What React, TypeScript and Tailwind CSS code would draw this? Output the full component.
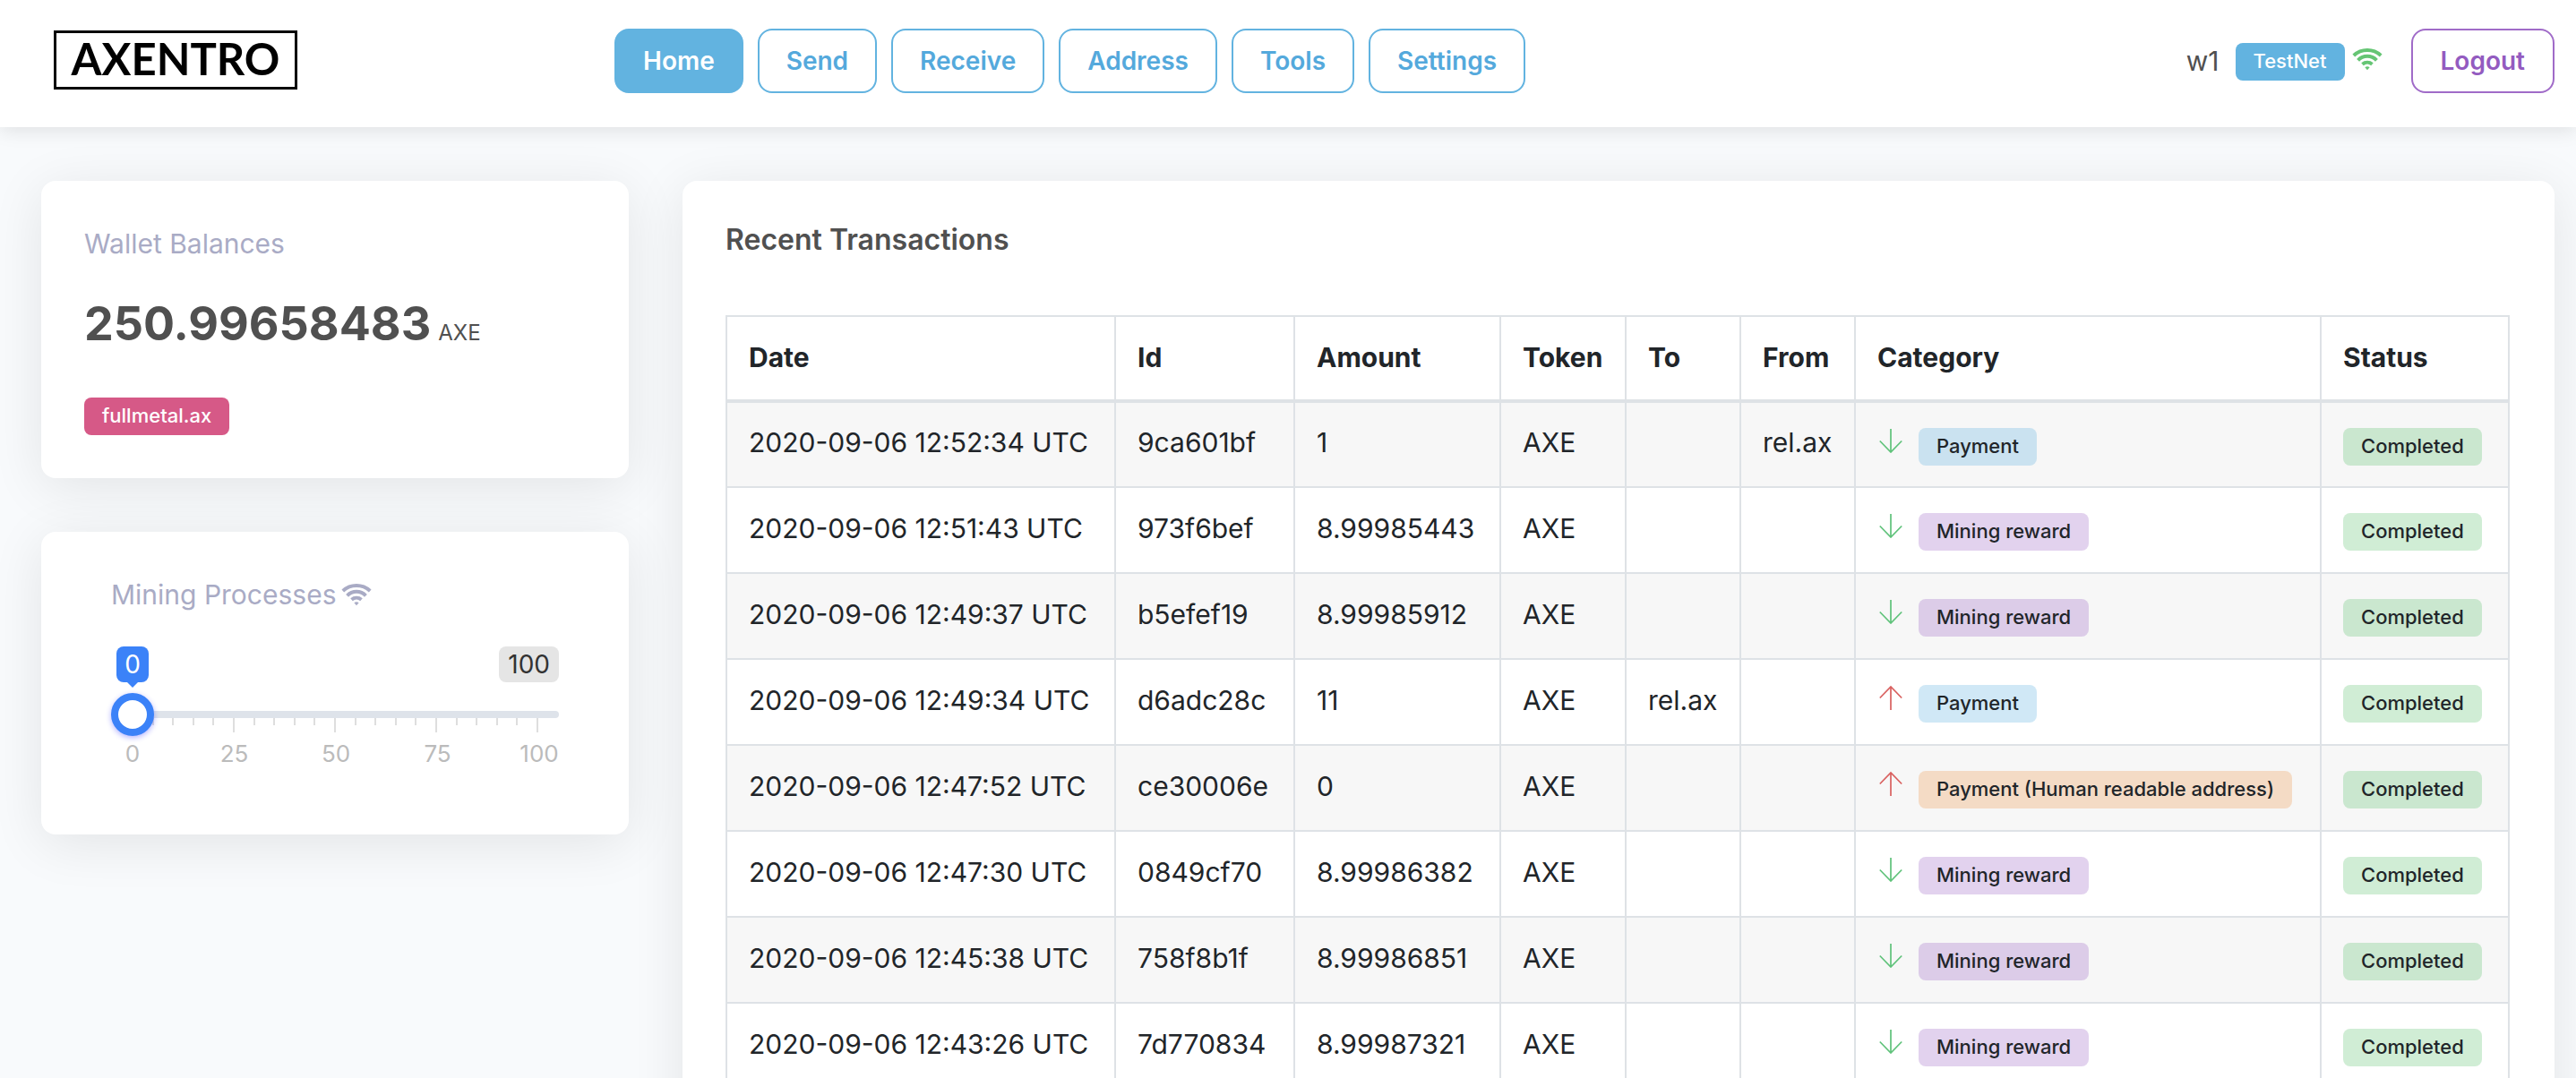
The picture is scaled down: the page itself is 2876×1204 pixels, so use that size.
import { useState } from "react";

const navItems = ["Home", "Send", "Receive", "Address", "Tools", "Settings"];

type Kind = "payment" | "mining" | "human";

interface Transaction {
  date: string;
  id: string;
  amount: string;
  to?: string;
  from?: string;
  incoming: boolean;
  kind: Kind;
}

const transactions: Transaction[] = [
  { date: "2020-09-06 12:52:34 UTC", id: "9ca601bf", amount: "1", from: "rel.ax", incoming: true, kind: "payment" },
  { date: "2020-09-06 12:51:43 UTC", id: "973f6bef", amount: "8.99985443", incoming: true, kind: "mining" },
  { date: "2020-09-06 12:49:37 UTC", id: "b5efef19", amount: "8.99985912", incoming: true, kind: "mining" },
  { date: "2020-09-06 12:49:34 UTC", id: "d6adc28c", amount: "11", to: "rel.ax", incoming: false, kind: "payment" },
  { date: "2020-09-06 12:47:52 UTC", id: "ce30006e", amount: "0", incoming: false, kind: "human" },
  { date: "2020-09-06 12:47:30 UTC", id: "0849cf70", amount: "8.99986382", incoming: true, kind: "mining" },
  { date: "2020-09-06 12:45:38 UTC", id: "758f8b1f", amount: "8.99986851", incoming: true, kind: "mining" },
  { date: "2020-09-06 12:43:26 UTC", id: "7d770834", amount: "8.99987321", incoming: true, kind: "mining" },
];

const kinds: Record<Kind, { label: string; tone: string }> = {
  payment: { label: "Payment", tone: "bg-[#62b3e0]/30 text-[#212529]" },
  mining: { label: "Mining reward", tone: "bg-[#a06bc8]/30 text-[#212529]" },
  human: { label: "Payment (Human readable address)", tone: "bg-[#ed9d54]/30 text-[#212529]" },
};

const columns = [
  { name: "Date", width: "w-[434px]" },
  { name: "Id", width: "w-[200px]" },
  { name: "Amount", width: "w-[230px]" },
  { name: "Token", width: "w-[140px]" },
  { name: "To", width: "w-[128px]" },
  { name: "From", width: "w-[128px]" },
  { name: "Category", width: "w-[520px]" },
  { name: "Status", width: "w-[210px]" },
];

function Badge({ tone, children }: { tone: string; children: string }) {
  return (
    <span className={`inline-block rounded-lg px-5 pb-[2px] text-[22px] leading-10 font-medium whitespace-nowrap ${tone}`}>
      {children}
    </span>
  );
}

function WifiIcon({ className }: { className: string }) {
  return (
    <svg viewBox="0 0 34 26" className={`h-[26px] w-[34px] ${className}`} fill="none" stroke="currentColor" strokeWidth="4" aria-hidden="true">
      <path d="M1.8 9a22.4 22.4 0 0 1 30.4 0" />
      <path d="M6.6 14.3a14.4 14.4 0 0 1 20.8 0" />
      <path d="M11.5 18.7a8.6 8.6 0 0 1 11 0" />
      <path d="M14.4 22.2a4.2 4.2 0 0 1 5.2 0l-2.6 3z" fill="currentColor" stroke="none" />
    </svg>
  );
}

function ArrowIcon({ incoming }: { incoming: boolean }) {
  return (
    <svg
      viewBox="0 0 28 28"
      className={`size-7 ${incoming ? "text-[#5fc27a]" : "text-[#d9605f]"}`}
      fill="none"
      stroke="currentColor"
      strokeWidth="1.7"
      role="img"
      aria-label={incoming ? "Incoming" : "Outgoing"}
    >
      {incoming ? <path d="M15 1V27M2.8 14.5L15 27L27.2 14.5" /> : <path d="M15 28V2M2.8 14.5L15 2L27.2 14.5" />}
    </svg>
  );
}

function Header() {
  return (
    <header className="relative z-10 flex h-[142px] items-start bg-white pt-8 pr-6 pl-15 shadow-[0_4px_20px_rgba(0,0,0,0.1)]">
      <a
        href="#home"
        className="mt-[2px] flex h-[66px] w-[272px] items-center justify-center border-[3px] border-black pb-1 font-['Lato',sans-serif] text-[49px] leading-none font-bold text-black"
      >
        AXENTRO
      </a>
      <nav className="ml-[354px] flex gap-4">
        {navItems.map((item, i) => (
          <button
            key={item}
            type="button"
            className={`h-[72px] rounded-2xl border-2 border-[#62b3e0] px-[30px] text-[28px] font-semibold ${
              i === 0 ? "bg-[#62b3e0] text-white" : "bg-white text-[#54a9dc]"
            }`}
          >
            {item}
          </button>
        ))}
      </nav>
      <div className="ml-auto flex h-[72px] items-center">
        <span className="text-[30px] text-[#505050]">w1</span>
        <span className="mt-[2px] ml-[18px] flex">
          <Badge tone="bg-[#62b3e0] text-white">TestNet</Badge>
        </span>
        <WifiIcon className="mb-1 ml-2 text-[#65c574]" />
        <button type="button" className="ml-8 h-[72px] rounded-2xl border-2 border-[#a06bc8] px-[31px] text-[28px] font-semibold text-[#935bc0]">
          Logout
        </button>
      </div>
    </header>
  );
}

const cardClass = "rounded-2xl bg-white shadow-[0_10px_60px_rgba(0,0,0,0.09)]";

function WalletCard() {
  return (
    <section className={`${cardClass} px-12 pt-[46px] pb-12`}>
      <h2 className="text-[30px] leading-[48px] text-[#a9abc5]">Wallet Balances</h2>
      <p className="mt-[26px] flex items-baseline gap-2 text-[#505050]">
        <span className="text-[52px] leading-[80px] font-bold">250.99658483</span>
        <span className="text-2xl">AXE</span>
      </p>
      <div className="mt-[42px] flex">
        <Badge tone="bg-[#d65987] text-white">fullmetal.ax</Badge>
      </div>
    </section>
  );
}

function MiningCard() {
  const [value, setValue] = useState(0);
  const ticks = Array.from({ length: 21 }, (_, i) => i);
  return (
    <section className={`${cardClass} px-[78px] pt-[46px] pb-[72px]`}>
      <label htmlFor="mining" className="flex items-center gap-[6px] text-[30px] leading-[48px] text-[#a9abc5]">
        Mining Processes
        <WifiIcon className="text-[#a9abc5]" />
      </label>
      <div className="mt-[34px] flex justify-between text-[28px] leading-10">
        <span className="relative ml-[6px] w-9 rounded-lg bg-[#3b82f8] text-center text-white">
          {value}
          <span className="absolute top-full left-1/2 -ml-[6px] border-x-6 border-t-6 border-x-transparent border-t-[#3b82f8]" />
        </span>
        <span className="rounded-lg bg-[#e5e5e5] px-[10px] text-[#333333]">100</span>
      </div>
      <input
        id="mining"
        type="range"
        min={0}
        max={100}
        value={value}
        onChange={(e) => setValue(Number(e.target.value))}
        className="relative z-10 mt-3 block h-12 w-full appearance-none bg-transparent [&::-webkit-slider-runnable-track]:h-2 [&::-webkit-slider-runnable-track]:rounded-full [&::-webkit-slider-runnable-track]:bg-[#dee3ea] [&::-webkit-slider-thumb]:-mt-5 [&::-webkit-slider-thumb]:size-12 [&::-webkit-slider-thumb]:appearance-none [&::-webkit-slider-thumb]:rounded-full [&::-webkit-slider-thumb]:border-8 [&::-webkit-slider-thumb]:border-[#3b82f8] [&::-webkit-slider-thumb]:bg-white [&::-webkit-slider-thumb]:shadow-[0_2px_6px_rgba(0,0,255,0.3)]"
      />
      <div className="-mt-5 flex h-4 items-start justify-between px-[23px]">
        {ticks.map((t) => (
          <span key={t} className={t % 5 === 0 ? "h-4 w-[2px] bg-[#dedede]" : "h-2 w-[2px] bg-[#dedede]"} />
        ))}
      </div>
      <div className="mt-[6px] flex justify-between pr-[22px] pl-6 text-[26px] leading-9 text-[#bbbbbb]">
        {["0", "25", "50", "75", "100"].map((l) => (
          <span key={l} className="flex w-0 justify-center">
            {l}
          </span>
        ))}
      </div>
    </section>
  );
}

function TransactionsCard() {
  return (
    <section className={`${cardClass} min-w-0 flex-1 pt-[42px] pr-[50px] pb-12 pl-12`}>
      <h2 className="text-[32px] leading-[48px] font-semibold text-[#505050]">Recent Transactions</h2>
      <table className="mt-[60px] w-full table-fixed border-collapse text-left text-[30px] text-[#212529]">
        <thead>
          <tr className="h-[95px]">
            {columns.map((c) => (
              <th key={c.name} scope="col" className={`border-2 border-b-4 border-[#dee2e6] px-6 pb-[2px] font-bold ${c.width}`}>
                {c.name}
              </th>
            ))}
          </tr>
        </thead>
        <tbody>
          {transactions.map((t) => (
            <tr key={t.id} className="h-[96px] whitespace-nowrap odd:bg-black/3 [&>td]:border-2 [&>td]:border-[#dee2e6] [&>td]:px-6 [&>td]:pb-1">
              <td>{t.date}</td>
              <td>{t.id}</td>
              <td>{t.amount}</td>
              <td>AXE</td>
              <td>{t.to}</td>
              <td>{t.from}</td>
              <td>
                <div className="flex items-start gap-[18px] pt-2">
                  <ArrowIcon incoming={t.incoming} />
                  <Badge tone={kinds[t.kind].tone}>{kinds[t.kind].label}</Badge>
                </div>
              </td>
              <td>
                <div className="flex pt-2">
                  <Badge tone="bg-[#65c574]/30 text-[#212529]">Completed</Badge>
                </div>
              </td>
            </tr>
          ))}
        </tbody>
      </table>
    </section>
  );
}

export default function App() {
  return (
    <div className="min-h-screen bg-[#f8fafc] font-['Inter',sans-serif]">
      <Header />
      <main className="flex gap-15 pt-15 pr-6 pb-15 pl-[46px]">
        <div className="flex w-[656px] shrink-0 flex-col gap-15">
          <WalletCard />
          <MiningCard />
        </div>
        <TransactionsCard />
      </main>
    </div>
  );
}
